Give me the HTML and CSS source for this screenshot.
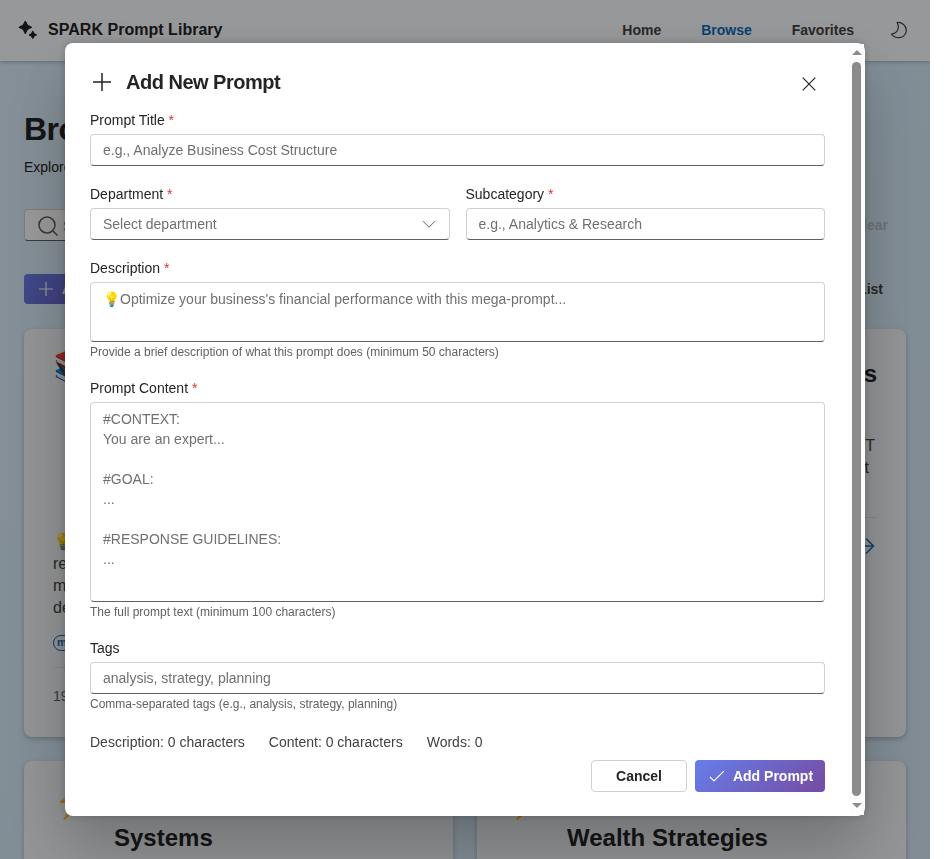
FILE: index.html
```html
<!DOCTYPE html>
<html lang="en">
<head>
<meta charset="utf-8">
<title>SPARK Prompt Library</title>
<link rel="stylesheet" href="styles.css">
</head>
<body>
<div class="app">
  <header class="topbar">
    <svg class="logo" width="24" height="24" viewBox="0 0 24 24"><path d="M8.600 3.200Q9.300 2.200 10 3.200L11.400 6Q11.800 6.900 12.700 7.300L15.500 8.600Q16.500 9.300 15.500 10L12.700 11.300Q11.800 11.700 11.400 12.600L10 15.400Q9.300 16.400 8.600 15.400L7.200 12.600Q6.800 11.700 5.900 11.300L3.100 10Q2.100 9.300 3.100 8.600L5.900 7.300Q6.800 6.900 7.200 6ZM16.100 13.200Q16.800 12.300 17.500 13.200L18.200 14.800Q18.400 15.300 18.900 15.500L20.500 16.200Q21.400 16.900 20.500 17.600L18.900 18.300Q18.400 18.500 18.200 19L17.500 20.600Q16.800 21.500 16.100 20.600L15.400 19Q15.200 18.500 14.700 18.300L13.100 17.600Q12.200 16.900 13.100 16.200L14.700 15.500Q15.200 15.300 15.400 14.800Z"/></svg>
    <span class="brand">SPARK Prompt Library</span>
    <nav class="nav">
      <a>Home</a><a class="active">Browse</a><a>Favorites</a>
      <svg class="moon" width="20" height="20" viewBox="0 0 20 20"><path d="M8.200 2.500C13 2 17.300 5.700 17.300 10.200C17.300 14.700 13.800 17.600 9.800 17.600C6.500 17.600 4 16.300 2.700 14.200C6.500 13.400 9 11.300 9.300 7.800C9.500 5.700 8.900 3.900 8.200 2.500Z"/></svg>
    </nav>
  </header>
  <main class="main">
    <h1>Browse Prompts</h1>
    <p class="lead">Explore the prompt library</p>
    <div class="searchrow">
      <div class="search"><svg width="24" height="24" viewBox="0 0 24 24"><circle cx="11" cy="11" r="8"/><path d="M17 17l4.500 4.500"/></svg><span>Search prompts</span></div>
      <span class="clear">Clear</span>
    </div>
    <div class="toolrow">
      <div class="add"><svg width="20" height="20" viewBox="0 0 20 20"><path d="M10 3v14M3 10h14"/></svg>Add Prompt</div>
      <span class="list">List</span>
    </div>
    <div class="grid">
      <article class="card tall">
        <div class="cardhead"><span class="emoji">📚</span></div>
        <p class="text">💡<br>research<br>material<br>development</p>
        <span class="tag">mega-prompt</span>
        <footer class="foot">19</footer>
      </article>
      <article class="card side">
        <div class="cardhead"><h2>Business</h2></div>
        <p class="text"><span class="inset-t">with T</span><br><span class="inset">prompt</span></p>
        <footer class="foot"><svg width="20" height="20" viewBox="0 0 20 20"><path d="M2 10h15M10 2.500l7.500 7.500-7.500 7.500"/></svg></footer>
      </article>
      <article class="card">
        <div class="cardhead"><span class="emoji">⚡</span><h2>Business<br>Systems</h2></div>
      </article>
      <article class="card">
        <div class="cardhead"><span class="emoji">⚡</span><h2>Business<br>Wealth Strategies</h2></div>
      </article>
    </div>
  </main>
</div>
<div class="backdrop">
  <section class="dialog" role="dialog">
    <div class="body">
      <div class="title">
        <svg width="24" height="24" viewBox="0 0 24 24"><path d="M12 3v18M3 12h18"/></svg>
        <h3>Add New Prompt</h3>
        <svg class="close" width="20" height="20" viewBox="0 0 20 20"><path d="M3.700 3.700l12.600 12.600M16.300 3.700L3.700 16.300"/></svg>
      </div>
      <form class="form">
        <div class="field"><label>Prompt Title <i>*</i></label><input placeholder="e.g., Analyze Business Cost Structure"></div>
        <div class="pair">
          <div class="field"><label>Department <i>*</i></label><div class="select">Select department<svg width="20" height="20" viewBox="0 0 20 20"><path d="M4 7.200l6 6 6-6"/></svg></div></div>
          <div class="field"><label>Subcategory <i>*</i></label><input placeholder="e.g., Analytics &amp; Research"></div>
        </div>
        <div class="field"><label>Description <i>*</i></label><textarea class="short" placeholder="💡Optimize your business's financial performance with this mega-prompt..."></textarea><small>Provide a brief description of what this prompt does (minimum 50 characters)</small></div>
        <div class="field"><label>Prompt Content <i>*</i></label><textarea class="long" placeholder="#CONTEXT:
You are an expert...

#GOAL:
...

#RESPONSE GUIDELINES:
..."></textarea><small>The full prompt text (minimum 100 characters)</small></div>
        <div class="field"><label>Tags</label><input placeholder="analysis, strategy, planning"><small>Comma-separated tags (e.g., analysis, strategy, planning)</small></div>
      </form>
      <div class="stats"><span>Description: 0 characters</span><span>Content: 0 characters</span><span>Words: 0</span></div>
      <div class="actions">
        <button class="cancel">Cancel</button>
        <button class="primary"><svg width="20" height="20" viewBox="0 0 20 20"><path d="M3 11l4 4L16.800 5.200"/></svg>Add Prompt</button>
      </div>
    </div>
    <div class="scroll"><b class="up"></b><div class="thumb"></div><b class="down"></b></div>
  </section>
</div>
</body>
</html>
```
FILE: styles.css
```css
* { box-sizing: border-box; }
html, body { height: 859px; overflow: hidden; }
body { margin: 0; background: #fff; font: 14px/20px "Liberation Sans", Arial, sans-serif; color: #242424; }
h1, h2, h3, p { margin: 0; }
svg { fill: none; stroke: currentColor; stroke-width: 1.2; flex: none; }

.app { width: 930px; height: 859px; overflow: hidden; background: linear-gradient(135deg, #e0f0fd 0%, #d9edfb 50%, #d8e9f7 100%); }
.topbar { height: 61px; padding: 0 21px 2px 16px; display: flex; align-items: center; background: #fcfdff; box-shadow: 0 1px 4px rgba(0,0,0,.25); position: relative; }
.logo { fill: #242424; stroke: none; }
.brand { margin-left: 8px; font-size: 16px; letter-spacing: .03px; font-weight: 700; }
.nav { margin-left: auto; display: flex; align-items: center; font-weight: 700; color: #424242; }
.nav a { margin-right: 40px; }
.nav .active { color: #0f6cbd; }
.moon { margin-left: -5px; }

.main { padding: 48px 24px 0; }
h1 { font-size: 32px; line-height: 40px; letter-spacing: -.5px; }
.lead { margin-top: 8px; }
.searchrow { margin-top: 32px; display: flex; justify-content: space-between; align-items: center; }
.search { width: 400px; height: 32px; border: 1px solid #d1d1d1; border-bottom-color: #616161; border-radius: 4px; background: #fff; padding: 1px 11px 0; display: flex; align-items: center; gap: 3px; color: #707070; }
.search svg { color: #616161; stroke-width: 1.600; }
.clear { margin-right: 18px; font-weight: 700; color: #bdbdbd; }
.toolrow { margin-top: 33px; display: flex; justify-content: space-between; align-items: center; }
.add { height: 30px; padding: 0 12px; border-radius: 4px; display: flex; align-items: center; gap: 6px; color: #fff; font-weight: 700; background: linear-gradient(135deg, #667eea, #764ba2); }
.list { margin-right: 23px; font-weight: 700; color: #424242; }
.grid { margin-top: 25px; display: grid; grid-template-columns: 1fr 1fr; grid-template-rows: 408px 408px; gap: 24px; }
.card { padding: 29px; border-radius: 8px; background: #f5f8fa; box-shadow: 0 2px 5px rgba(0,0,0,.22); }
.cardhead { display: flex; gap: 16px; }
.emoji { width: 45px; font-size: 36px; line-height: 32px; margin-top: -6px; }
h2 { font-size: 24px; line-height: 32px; }
.text { font-size: 16px; line-height: 22px; color: #424242; }
.tall .text { margin-top: 147px; }
.tag { display: inline-block; height: 16px; margin-top: 16px; padding: 0 3px; border: 1px solid #0f6cbd; border-radius: 8px; color: #0f6cbd; font-size: 11px; font-weight: 700; line-height: 13px; vertical-align: top; }
.foot { margin-top: 16px; padding-top: 18px; border-top: 1px solid #e0e0e0; color: #616161; }
.side { text-align: right; }
.side .cardhead { justify-content: flex-end; }
.side .text { margin-top: 45px; }
.side .inset { margin-right: 8px; }
.side .inset-t { margin-right: 2px; }
.side .foot { margin-top: 38px; padding-right: 1px; color: #0f6cbd; }
.side .foot svg { stroke-width: 1.500; }

.backdrop { position: fixed; inset: 0 15px 0 0; background: rgba(0,0,0,.4); display: flex; justify-content: center; align-items: center; }
.dialog { width: 800px; height: 773px; padding: 1px; border-radius: 8px; background: #fff; box-shadow: 0 0 8px rgba(0,0,0,.2), 0 32px 64px rgba(0,0,0,.24); display: flex; }
.body { flex: 1; padding: 24px; }
.title { height: 28px; display: flex; align-items: center; gap: 12px; }
.title svg { stroke-width: 1.500; }
h3 { font-size: 20px; line-height: 28px; letter-spacing: -.5px; }
.title .close { margin: 4px 6px 0 auto; stroke-width: 1.200; }
.form { margin-top: 12px; display: flex; flex-direction: column; gap: 16px; }
.pair { display: grid; grid-template-columns: 1fr 1fr; gap: 16px; }
.field { display: flex; flex-direction: column; gap: 2px; min-width: 0; }
label { padding: 2px 0; }
label i { font-style: normal; color: #d13438; }
input, textarea, .select { display: block; width: 100%; height: 32px; margin: 0; padding: 0 12px; border: 1px solid #d1d1d1; border-bottom-color: #616161; border-radius: 4px; background: #fff; color: #707070; font: inherit; resize: none; overflow: hidden; }
textarea { padding: 6px 12px; }
.short { height: 60px; }
.long { height: 200px; }
::placeholder { color: #707070; opacity: 1; }
.select { display: flex; align-items: center; justify-content: space-between; padding-right: 10px; }
.select svg { color: #616161; stroke-width: 1; }
small { font-size: 12px; line-height: 16px; color: #616161; }
.stats { margin-top: 20px; display: flex; gap: 24px; color: #424242; }
.actions { margin-top: 8px; display: flex; justify-content: flex-end; gap: 8px; }
button { height: 32px; border: 1px solid #d1d1d1; border-radius: 4px; background: #fff; color: #242424; font: 700 14px/20px "Liberation Sans", Arial, sans-serif; padding: 0; display: flex; align-items: center; justify-content: center; }
.cancel { width: 96px; }
.primary { width: 130px; gap: 6px; border: 0; color: #fff; background: linear-gradient(135deg, #667eea, #764ba2); }
.scroll { width: 15px; background: #fcfcfc; display: flex; flex-direction: column; align-items: center; padding: 6px 0 7px; }
.up, .down { border: 5px solid transparent; border-top: 0; border-bottom: 5px solid #8b8b8b; }
.down { border-top: 5px solid #8b8b8b; border-bottom: 0; }
.thumb { width: 9px; flex: 1; margin: 7px 0; border-radius: 5px; background: #8b8b8b; }
```
